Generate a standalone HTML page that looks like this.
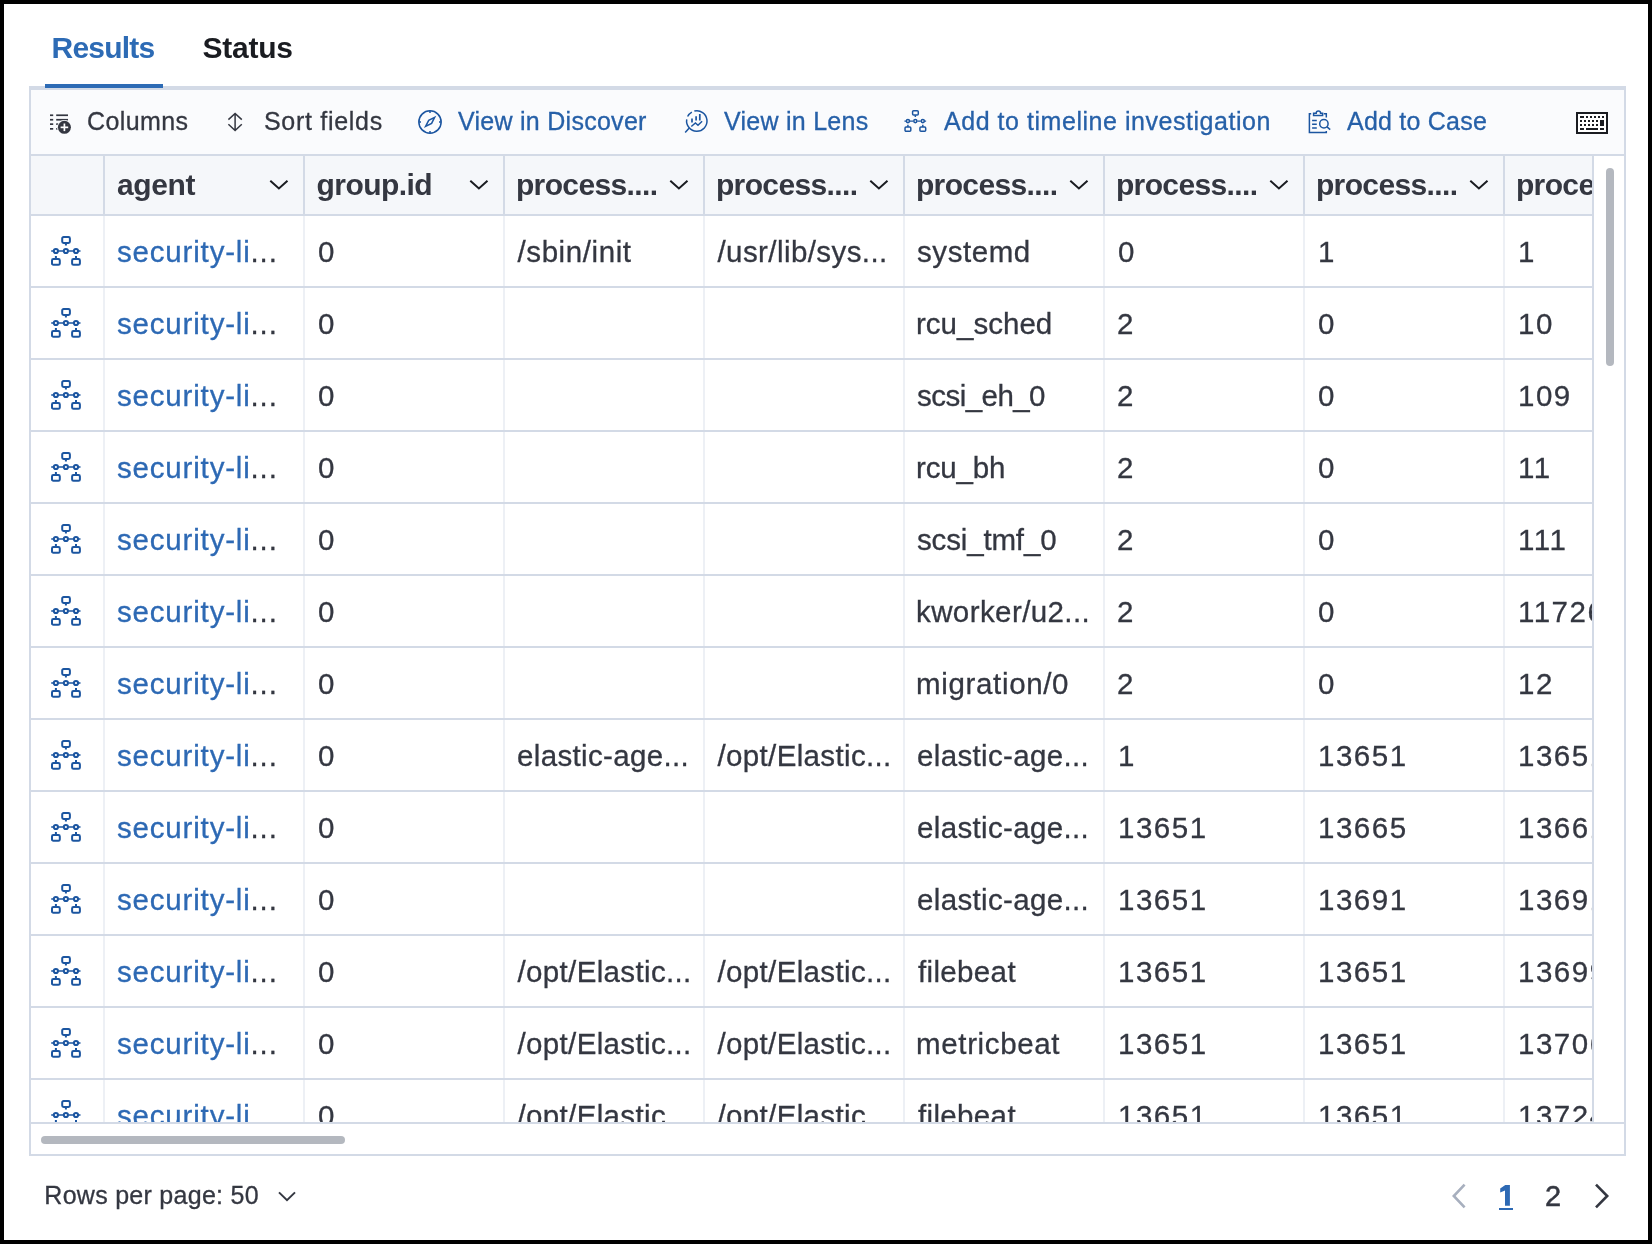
<!DOCTYPE html>
<html><head><meta charset="utf-8">
<style>
*{box-sizing:border-box;margin:0;padding:0}
html,body{width:1652px;height:1244px;overflow:hidden;background:#000}
body{position:relative;font-family:"Liberation Sans",sans-serif;color:#343741}
.a{position:absolute;white-space:nowrap;line-height:1}
.b{position:absolute}
.tabs{font-size:30px;font-weight:700}
.tb{font-size:25px;color:#343741;-webkit-text-stroke:0.3px currentColor}
.tbl{color:#2660A8}
.hd{font-size:30px;font-weight:700;color:#343741}
.cl{font-size:29.5px;color:#343741;-webkit-text-stroke:0.3px currentColor}
.lk{color:#2D69B4}
.clip{position:absolute;overflow:hidden}
.layer{position:absolute;left:0;top:0;width:1652px;height:1244px;will-change:transform}
</style></head><body>

<div class="b" style="left:4px;top:4px;width:1644px;height:1236px;background:#fff"></div>
<div class="layer">
<div class="a tabs" style="left:51.6px;top:33px;letter-spacing:-0.8px;color:#2D6BB5">Results</div>
<div class="a tabs" style="left:202.4px;top:33px;letter-spacing:-0.23px;color:#1A1C21">Status</div>
<div class="b" style="left:29px;top:86px;width:1597px;height:1070px;background:#D3DAE6"></div>
<div class="b" style="left:31px;top:90px;width:1593px;height:64px;background:#FAFBFD"></div>
<div class="b" style="left:31px;top:156px;width:1593px;height:966px;background:#fff"></div>
<div class="b" style="left:31px;top:1124px;width:1593px;height:30px;background:#fff"></div>
<div class="b" style="left:45px;top:84px;width:118px;height:4px;background:#2D6BB5"></div>
<div class="a tb" style="left:87px;top:109px;letter-spacing:0.4px">Columns</div>
<div class="a tb" style="left:264px;top:109px;letter-spacing:0.7px">Sort fields</div>
<div class="a tb tbl" style="left:458px;top:109px;letter-spacing:0.27px">View in Discover</div>
<div class="a tb tbl" style="left:724px;top:109px;letter-spacing:0.26px">View in Lens</div>
<div class="a tb tbl" style="left:944px;top:109px;letter-spacing:0.54px">Add to timeline investigation</div>
<div class="a tb tbl" style="left:1347px;top:109px;letter-spacing:0.22px">Add to Case</div>
<div class="clip" style="left:31px;top:156px;width:1561px;height:58px;background:#F5F7FA">
<div class="b" style="left:72px;top:0;width:2px;height:58px;background:#D3DAE6"></div>
<div class="a hd" style="left:85.9px;top:14px;letter-spacing:-0.35px">agent</div>
<div class="b" style="left:272px;top:0;width:2px;height:58px;background:#D3DAE6"></div>
<div class="a hd" style="left:285.5px;top:14px;letter-spacing:-0.54px">group.id</div>
<div class="b" style="left:472px;top:0;width:2px;height:58px;background:#D3DAE6"></div>
<div class="a hd" style="left:484.9px;top:14px;letter-spacing:-0.62px">process....</div>
<div class="b" style="left:672px;top:0;width:2px;height:58px;background:#D3DAE6"></div>
<div class="a hd" style="left:684.9px;top:14px;letter-spacing:-0.62px">process....</div>
<div class="b" style="left:872px;top:0;width:2px;height:58px;background:#D3DAE6"></div>
<div class="a hd" style="left:884.9px;top:14px;letter-spacing:-0.62px">process....</div>
<div class="b" style="left:1072px;top:0;width:2px;height:58px;background:#D3DAE6"></div>
<div class="a hd" style="left:1084.9px;top:14px;letter-spacing:-0.62px">process....</div>
<div class="b" style="left:1272px;top:0;width:2px;height:58px;background:#D3DAE6"></div>
<div class="a hd" style="left:1284.9px;top:14px;letter-spacing:-0.62px">process....</div>
<div class="b" style="left:1472px;top:0;width:2px;height:58px;background:#D3DAE6"></div>
<div class="a hd" style="left:1484.9px;top:14px;letter-spacing:-0.62px">process....</div>
</div>
<div class="b" style="left:31px;top:214px;width:1561px;height:2px;background:#D3DAE6"></div>
<div class="clip" style="left:31px;top:216px;width:1561px;height:906px">
<div class="b" style="left:72px;top:0;width:2px;height:906px;background:#EDF0F5"></div>
<div class="b" style="left:272px;top:0;width:2px;height:906px;background:#EDF0F5"></div>
<div class="b" style="left:472px;top:0;width:2px;height:906px;background:#EDF0F5"></div>
<div class="b" style="left:672px;top:0;width:2px;height:906px;background:#EDF0F5"></div>
<div class="b" style="left:872px;top:0;width:2px;height:906px;background:#EDF0F5"></div>
<div class="b" style="left:1072px;top:0;width:2px;height:906px;background:#EDF0F5"></div>
<div class="b" style="left:1272px;top:0;width:2px;height:906px;background:#EDF0F5"></div>
<div class="b" style="left:1472px;top:0;width:2px;height:906px;background:#EDF0F5"></div>
<div class="b" style="left:0;top:70px;width:1561px;height:2px;background:#D3DAE6"></div>
<div class="a cl" style="left:86px;top:21px;letter-spacing:0.82px"><span class="lk">security-li</span>...</div>
<div class="a cl" style="left:287px;top:21px;letter-spacing:1.5px">0</div>
<div class="a cl" style="left:486.5px;top:21px;letter-spacing:0.59px">/sbin/init</div>
<div class="a cl" style="left:686.5px;top:21px;letter-spacing:0.42px">/usr/lib/sys...</div>
<div class="a cl" style="left:886px;top:21px;letter-spacing:0.57px">systemd</div>
<div class="a cl" style="left:1087px;top:21px;letter-spacing:1.5px">0</div>
<div class="a cl" style="left:1287px;top:21px;letter-spacing:1.5px">1</div>
<div class="a cl" style="left:1487px;top:21px;letter-spacing:1.5px">1</div>
<div class="b" style="left:0;top:142px;width:1561px;height:2px;background:#D3DAE6"></div>
<div class="a cl" style="left:86px;top:93px;letter-spacing:0.82px"><span class="lk">security-li</span>...</div>
<div class="a cl" style="left:287px;top:93px;letter-spacing:1.5px">0</div>
<div class="a cl" style="left:885px;top:93px;letter-spacing:0.02px">rcu_sched</div>
<div class="a cl" style="left:1086px;top:93px;letter-spacing:1.5px">2</div>
<div class="a cl" style="left:1287px;top:93px;letter-spacing:1.5px">0</div>
<div class="a cl" style="left:1487px;top:93px;letter-spacing:1.5px">10</div>
<div class="b" style="left:0;top:214px;width:1561px;height:2px;background:#D3DAE6"></div>
<div class="a cl" style="left:86px;top:165px;letter-spacing:0.82px"><span class="lk">security-li</span>...</div>
<div class="a cl" style="left:287px;top:165px;letter-spacing:1.5px">0</div>
<div class="a cl" style="left:886px;top:165px;letter-spacing:-0.54px">scsi_eh_0</div>
<div class="a cl" style="left:1086px;top:165px;letter-spacing:1.5px">2</div>
<div class="a cl" style="left:1287px;top:165px;letter-spacing:1.5px">0</div>
<div class="a cl" style="left:1487px;top:165px;letter-spacing:1.5px">109</div>
<div class="b" style="left:0;top:286px;width:1561px;height:2px;background:#D3DAE6"></div>
<div class="a cl" style="left:86px;top:237px;letter-spacing:0.82px"><span class="lk">security-li</span>...</div>
<div class="a cl" style="left:287px;top:237px;letter-spacing:1.5px">0</div>
<div class="a cl" style="left:885px;top:237px;letter-spacing:-0.18px">rcu_bh</div>
<div class="a cl" style="left:1086px;top:237px;letter-spacing:1.5px">2</div>
<div class="a cl" style="left:1287px;top:237px;letter-spacing:1.5px">0</div>
<div class="a cl" style="left:1487px;top:237px;letter-spacing:1.5px">11</div>
<div class="b" style="left:0;top:358px;width:1561px;height:2px;background:#D3DAE6"></div>
<div class="a cl" style="left:86px;top:309px;letter-spacing:0.82px"><span class="lk">security-li</span>...</div>
<div class="a cl" style="left:287px;top:309px;letter-spacing:1.5px">0</div>
<div class="a cl" style="left:886px;top:309px;letter-spacing:-0.16px">scsi_tmf_0</div>
<div class="a cl" style="left:1086px;top:309px;letter-spacing:1.5px">2</div>
<div class="a cl" style="left:1287px;top:309px;letter-spacing:1.5px">0</div>
<div class="a cl" style="left:1487px;top:309px;letter-spacing:1.5px">111</div>
<div class="b" style="left:0;top:430px;width:1561px;height:2px;background:#D3DAE6"></div>
<div class="a cl" style="left:86px;top:381px;letter-spacing:0.82px"><span class="lk">security-li</span>...</div>
<div class="a cl" style="left:287px;top:381px;letter-spacing:1.5px">0</div>
<div class="a cl" style="left:885px;top:381px;letter-spacing:0.41px">kworker/u2...</div>
<div class="a cl" style="left:1086px;top:381px;letter-spacing:1.5px">2</div>
<div class="a cl" style="left:1287px;top:381px;letter-spacing:1.5px">0</div>
<div class="a cl" style="left:1487px;top:381px;letter-spacing:1.5px">11726</div>
<div class="b" style="left:0;top:502px;width:1561px;height:2px;background:#D3DAE6"></div>
<div class="a cl" style="left:86px;top:453px;letter-spacing:0.82px"><span class="lk">security-li</span>...</div>
<div class="a cl" style="left:287px;top:453px;letter-spacing:1.5px">0</div>
<div class="a cl" style="left:885px;top:453px;letter-spacing:0.66px">migration/0</div>
<div class="a cl" style="left:1086px;top:453px;letter-spacing:1.5px">2</div>
<div class="a cl" style="left:1287px;top:453px;letter-spacing:1.5px">0</div>
<div class="a cl" style="left:1487px;top:453px;letter-spacing:1.5px">12</div>
<div class="b" style="left:0;top:574px;width:1561px;height:2px;background:#D3DAE6"></div>
<div class="a cl" style="left:86px;top:525px;letter-spacing:0.82px"><span class="lk">security-li</span>...</div>
<div class="a cl" style="left:287px;top:525px;letter-spacing:1.5px">0</div>
<div class="a cl" style="left:486px;top:525px;letter-spacing:0.35px">elastic-age...</div>
<div class="a cl" style="left:686.5px;top:525px;letter-spacing:0.35px">/opt/Elastic...</div>
<div class="a cl" style="left:886px;top:525px;letter-spacing:0.35px">elastic-age...</div>
<div class="a cl" style="left:1087px;top:525px;letter-spacing:1.5px">1</div>
<div class="a cl" style="left:1287px;top:525px;letter-spacing:1.5px">13651</div>
<div class="a cl" style="left:1487px;top:525px;letter-spacing:1.5px">13651</div>
<div class="b" style="left:0;top:646px;width:1561px;height:2px;background:#D3DAE6"></div>
<div class="a cl" style="left:86px;top:597px;letter-spacing:0.82px"><span class="lk">security-li</span>...</div>
<div class="a cl" style="left:287px;top:597px;letter-spacing:1.5px">0</div>
<div class="a cl" style="left:886px;top:597px;letter-spacing:0.35px">elastic-age...</div>
<div class="a cl" style="left:1087px;top:597px;letter-spacing:1.5px">13651</div>
<div class="a cl" style="left:1287px;top:597px;letter-spacing:1.5px">13665</div>
<div class="a cl" style="left:1487px;top:597px;letter-spacing:1.5px">13661</div>
<div class="b" style="left:0;top:718px;width:1561px;height:2px;background:#D3DAE6"></div>
<div class="a cl" style="left:86px;top:669px;letter-spacing:0.82px"><span class="lk">security-li</span>...</div>
<div class="a cl" style="left:287px;top:669px;letter-spacing:1.5px">0</div>
<div class="a cl" style="left:886px;top:669px;letter-spacing:0.35px">elastic-age...</div>
<div class="a cl" style="left:1087px;top:669px;letter-spacing:1.5px">13651</div>
<div class="a cl" style="left:1287px;top:669px;letter-spacing:1.5px">13691</div>
<div class="a cl" style="left:1487px;top:669px;letter-spacing:1.5px">13691</div>
<div class="b" style="left:0;top:790px;width:1561px;height:2px;background:#D3DAE6"></div>
<div class="a cl" style="left:86px;top:741px;letter-spacing:0.82px"><span class="lk">security-li</span>...</div>
<div class="a cl" style="left:287px;top:741px;letter-spacing:1.5px">0</div>
<div class="a cl" style="left:486.5px;top:741px;letter-spacing:0.35px">/opt/Elastic...</div>
<div class="a cl" style="left:686.5px;top:741px;letter-spacing:0.35px">/opt/Elastic...</div>
<div class="a cl" style="left:887px;top:741px;letter-spacing:0.35px">filebeat</div>
<div class="a cl" style="left:1087px;top:741px;letter-spacing:1.5px">13651</div>
<div class="a cl" style="left:1287px;top:741px;letter-spacing:1.5px">13651</div>
<div class="a cl" style="left:1487px;top:741px;letter-spacing:1.5px">13699</div>
<div class="b" style="left:0;top:862px;width:1561px;height:2px;background:#D3DAE6"></div>
<div class="a cl" style="left:86px;top:813px;letter-spacing:0.82px"><span class="lk">security-li</span>...</div>
<div class="a cl" style="left:287px;top:813px;letter-spacing:1.5px">0</div>
<div class="a cl" style="left:486.5px;top:813px;letter-spacing:0.35px">/opt/Elastic...</div>
<div class="a cl" style="left:686.5px;top:813px;letter-spacing:0.35px">/opt/Elastic...</div>
<div class="a cl" style="left:885px;top:813px;letter-spacing:0.65px">metricbeat</div>
<div class="a cl" style="left:1087px;top:813px;letter-spacing:1.5px">13651</div>
<div class="a cl" style="left:1287px;top:813px;letter-spacing:1.5px">13651</div>
<div class="a cl" style="left:1487px;top:813px;letter-spacing:1.5px">13706</div>
<div class="b" style="left:0;top:934px;width:1561px;height:2px;background:#D3DAE6"></div>
<div class="a cl" style="left:86px;top:885px;letter-spacing:0.82px"><span class="lk">security-li</span>...</div>
<div class="a cl" style="left:287px;top:885px;letter-spacing:1.5px">0</div>
<div class="a cl" style="left:486.5px;top:885px;letter-spacing:0.35px">/opt/Elastic...</div>
<div class="a cl" style="left:686.5px;top:885px;letter-spacing:0.35px">/opt/Elastic...</div>
<div class="a cl" style="left:887px;top:885px;letter-spacing:0.35px">filebeat</div>
<div class="a cl" style="left:1087px;top:885px;letter-spacing:1.5px">13651</div>
<div class="a cl" style="left:1287px;top:885px;letter-spacing:1.5px">13651</div>
<div class="a cl" style="left:1487px;top:885px;letter-spacing:1.5px">13724</div>
</div>
<div class="b" style="left:1592px;top:156px;width:2px;height:966px;background:#D3DAE6"></div>
<div class="b" style="left:31px;top:1122px;width:1593px;height:2px;background:#D3DAE6"></div>
<div class="b" style="left:41px;top:1136px;width:304px;height:8px;border-radius:4px;background:#B4B8BF"></div>
<div class="b" style="left:1606px;top:168px;width:8px;height:198px;border-radius:4px;background:#B4B8BF"></div>
<div class="a tb" style="left:44.3px;top:1183px;letter-spacing:0.28px">Rows per page: 50</div>
<div class="b" style="left:1499px;top:1208px;width:14px;height:2px;background:#2D69B4"></div>
<div class="a" style="left:1545px;top:1182px;font-size:29px;color:#343741;-webkit-text-stroke:0.5px currentColor">2</div>
<svg class="b" style="left:0;top:0" width="1652" height="1244" viewBox="0 0 1652 1244"><g fill="#343741"><rect x="50" y="114.4" width="3.2" height="1.7"/><rect x="50" y="118.9" width="3.2" height="1.7"/><rect x="50" y="123.3" width="3.2" height="1.7"/><rect x="50" y="128" width="3.2" height="1.7"/><rect x="56.2" y="114.4" width="11.8" height="1.7"/><rect x="56.2" y="118.9" width="11.8" height="1.7"/><rect x="56.2" y="123.3" width="4.5" height="1.7"/><rect x="56.2" y="128" width="4.5" height="1.7"/><circle cx="64.4" cy="127.3" r="7.4" fill="#FAFBFD"/><circle cx="64.4" cy="127.3" r="6.5"/><rect x="60.6" y="126.5" width="7.6" height="1.7" fill="#fff"/><rect x="63.55" y="123.5" width="1.7" height="7.6" fill="#fff"/></g><g fill="none" stroke="#343741" stroke-width="1.5" stroke-linecap="butt"><path d="M235.1 113.6V130.3M228.4 119.6L235.1 113.4L241.8 119.6M228.4 124.3L235.1 130.5L241.8 124.3"/></g><g fill="none" stroke="#1B55A0" stroke-width="1.5"><circle cx="430" cy="122" r="11.15"/><path d="M430 110.8v2.2M430 131v2.2M418.8 122h2.2M439 122h2.2"/><path d="M434.6 117.4L428.7 120.3L425.6 126.4L431.6 123.4Z" stroke-linejoin="miter"/></g><g fill="none" stroke="#1B55A0" stroke-width="1.5"><path d="M694.33 111.10 A10.2 10.2 0 1 1 686.73 119.40"/><path d="M687.63 116.53 A10.2 10.2 0 0 1 691.85 112.08"/><path d="M689 128.2L685.2 132.4"/><path d="M692 118.4v4.1M696.1 116.3v4.3M699.8 114v6.4" stroke-width="1.7"/><path d="M691.3 126.5L695.4 123L698 125.3L702.1 121.3"/></g><g transform="translate(904.3,110) scale(0.74)" fill="none" stroke="#1B55A0" stroke-width="2.0"><rect x="11.2" y="1" width="7.7" height="5.9" rx="1.4"/><path d="M14.9 6.9v2.6"/><path d="M0.2 15H2.5M7.3 15H12.2M17.6 15H22.3M27.3 15H29.5" stroke-width="1.5"/><circle cx="4.9" cy="15" r="2.1"/><circle cx="14.9" cy="15" r="2.1"/><circle cx="25" cy="15" r="2.1"/><path d="M4.9 20v3M25 20v3"/><rect x="1" y="23" width="7.8" height="5.8" rx="1.4"/><rect x="21.1" y="23" width="7.8" height="5.8" rx="1.4"/></g><g fill="none" stroke="#1B55A0" stroke-width="1.5"><path d="M1311.2 113.7H1309.4V132.4H1326.3V131"/><path d="M1323.8 113.7H1326.3V117.5"/><path d="M1313.6 115.6V113.2H1316.2A2 2 0 0 1 1320.6 113.2H1322.6V115.6Z"/><path d="M1312.1 120.4h4.7M1312.1 124.2h4.7M1312.1 127.9h4.7"/><circle cx="1323.9" cy="123.7" r="4.2"/><path d="M1327 126.9L1330.2 129.6"/></g><g fill="#1A1C21"><path fill-rule="evenodd" d="M1576 112h32v22h-32zM1578 114v18h28v-18z"/><rect x="1578" y="114" width="28" height="18" fill="#fff"/><rect x="1580" y="116" width="4" height="2"/><rect x="1586" y="116" width="2" height="2"/><rect x="1590" y="116" width="2" height="2"/><rect x="1594" y="116" width="2" height="2"/><rect x="1598" y="116" width="2" height="2"/><rect x="1602" y="116" width="2" height="2"/><rect x="1580" y="120" width="2" height="2"/><rect x="1580" y="124" width="2" height="2"/><rect x="1584" y="120" width="2" height="2"/><rect x="1584" y="124" width="2" height="2"/><rect x="1588" y="120" width="2" height="2"/><rect x="1588" y="124" width="2" height="2"/><rect x="1592" y="120" width="2" height="2"/><rect x="1592" y="124" width="2" height="2"/><rect x="1596" y="120" width="2" height="2"/><rect x="1596" y="124" width="2" height="2"/><rect x="1600" y="120" width="4" height="6"/><rect x="1580" y="128" width="4" height="2"/><rect x="1586" y="128" width="12" height="2"/><rect x="1600" y="128" width="4" height="2"/></g><path d="M270.3 180.7L278.9 188.5L287.5 180.7" fill="none" stroke="#1A1C21" stroke-width="2"/><path d="M470.3 180.7L478.9 188.5L487.5 180.7" fill="none" stroke="#1A1C21" stroke-width="2"/><path d="M670.3 180.7L678.9 188.5L687.5 180.7" fill="none" stroke="#1A1C21" stroke-width="2"/><path d="M870.3 180.7L878.9 188.5L887.5 180.7" fill="none" stroke="#1A1C21" stroke-width="2"/><path d="M1070.3 180.7L1078.9 188.5L1087.5 180.7" fill="none" stroke="#1A1C21" stroke-width="2"/><path d="M1270.3 180.7L1278.9 188.5L1287.5 180.7" fill="none" stroke="#1A1C21" stroke-width="2"/><path d="M1470.3 180.7L1478.9 188.5L1487.5 180.7" fill="none" stroke="#1A1C21" stroke-width="2"/><path d="M1670.3 180.7L1678.9 188.5L1687.5 180.7" fill="none" stroke="#1A1C21" stroke-width="2"/><clipPath id="bc"><rect x="31" y="216" width="1561" height="906"/></clipPath><g clip-path="url(#bc)"><g transform="translate(51,236) scale(1.0)" fill="none" stroke="#1B55A0" stroke-width="2.0"><rect x="11.2" y="1" width="7.7" height="5.9" rx="1.4"/><path d="M14.9 6.9v2.6"/><path d="M0.2 15H2.5M7.3 15H12.2M17.6 15H22.3M27.3 15H29.5" stroke-width="1.5"/><circle cx="4.9" cy="15" r="2.1"/><circle cx="14.9" cy="15" r="2.1"/><circle cx="25" cy="15" r="2.1"/><path d="M4.9 20v3M25 20v3"/><rect x="1" y="23" width="7.8" height="5.8" rx="1.4"/><rect x="21.1" y="23" width="7.8" height="5.8" rx="1.4"/></g><g transform="translate(51,308) scale(1.0)" fill="none" stroke="#1B55A0" stroke-width="2.0"><rect x="11.2" y="1" width="7.7" height="5.9" rx="1.4"/><path d="M14.9 6.9v2.6"/><path d="M0.2 15H2.5M7.3 15H12.2M17.6 15H22.3M27.3 15H29.5" stroke-width="1.5"/><circle cx="4.9" cy="15" r="2.1"/><circle cx="14.9" cy="15" r="2.1"/><circle cx="25" cy="15" r="2.1"/><path d="M4.9 20v3M25 20v3"/><rect x="1" y="23" width="7.8" height="5.8" rx="1.4"/><rect x="21.1" y="23" width="7.8" height="5.8" rx="1.4"/></g><g transform="translate(51,380) scale(1.0)" fill="none" stroke="#1B55A0" stroke-width="2.0"><rect x="11.2" y="1" width="7.7" height="5.9" rx="1.4"/><path d="M14.9 6.9v2.6"/><path d="M0.2 15H2.5M7.3 15H12.2M17.6 15H22.3M27.3 15H29.5" stroke-width="1.5"/><circle cx="4.9" cy="15" r="2.1"/><circle cx="14.9" cy="15" r="2.1"/><circle cx="25" cy="15" r="2.1"/><path d="M4.9 20v3M25 20v3"/><rect x="1" y="23" width="7.8" height="5.8" rx="1.4"/><rect x="21.1" y="23" width="7.8" height="5.8" rx="1.4"/></g><g transform="translate(51,452) scale(1.0)" fill="none" stroke="#1B55A0" stroke-width="2.0"><rect x="11.2" y="1" width="7.7" height="5.9" rx="1.4"/><path d="M14.9 6.9v2.6"/><path d="M0.2 15H2.5M7.3 15H12.2M17.6 15H22.3M27.3 15H29.5" stroke-width="1.5"/><circle cx="4.9" cy="15" r="2.1"/><circle cx="14.9" cy="15" r="2.1"/><circle cx="25" cy="15" r="2.1"/><path d="M4.9 20v3M25 20v3"/><rect x="1" y="23" width="7.8" height="5.8" rx="1.4"/><rect x="21.1" y="23" width="7.8" height="5.8" rx="1.4"/></g><g transform="translate(51,524) scale(1.0)" fill="none" stroke="#1B55A0" stroke-width="2.0"><rect x="11.2" y="1" width="7.7" height="5.9" rx="1.4"/><path d="M14.9 6.9v2.6"/><path d="M0.2 15H2.5M7.3 15H12.2M17.6 15H22.3M27.3 15H29.5" stroke-width="1.5"/><circle cx="4.9" cy="15" r="2.1"/><circle cx="14.9" cy="15" r="2.1"/><circle cx="25" cy="15" r="2.1"/><path d="M4.9 20v3M25 20v3"/><rect x="1" y="23" width="7.8" height="5.8" rx="1.4"/><rect x="21.1" y="23" width="7.8" height="5.8" rx="1.4"/></g><g transform="translate(51,596) scale(1.0)" fill="none" stroke="#1B55A0" stroke-width="2.0"><rect x="11.2" y="1" width="7.7" height="5.9" rx="1.4"/><path d="M14.9 6.9v2.6"/><path d="M0.2 15H2.5M7.3 15H12.2M17.6 15H22.3M27.3 15H29.5" stroke-width="1.5"/><circle cx="4.9" cy="15" r="2.1"/><circle cx="14.9" cy="15" r="2.1"/><circle cx="25" cy="15" r="2.1"/><path d="M4.9 20v3M25 20v3"/><rect x="1" y="23" width="7.8" height="5.8" rx="1.4"/><rect x="21.1" y="23" width="7.8" height="5.8" rx="1.4"/></g><g transform="translate(51,668) scale(1.0)" fill="none" stroke="#1B55A0" stroke-width="2.0"><rect x="11.2" y="1" width="7.7" height="5.9" rx="1.4"/><path d="M14.9 6.9v2.6"/><path d="M0.2 15H2.5M7.3 15H12.2M17.6 15H22.3M27.3 15H29.5" stroke-width="1.5"/><circle cx="4.9" cy="15" r="2.1"/><circle cx="14.9" cy="15" r="2.1"/><circle cx="25" cy="15" r="2.1"/><path d="M4.9 20v3M25 20v3"/><rect x="1" y="23" width="7.8" height="5.8" rx="1.4"/><rect x="21.1" y="23" width="7.8" height="5.8" rx="1.4"/></g><g transform="translate(51,740) scale(1.0)" fill="none" stroke="#1B55A0" stroke-width="2.0"><rect x="11.2" y="1" width="7.7" height="5.9" rx="1.4"/><path d="M14.9 6.9v2.6"/><path d="M0.2 15H2.5M7.3 15H12.2M17.6 15H22.3M27.3 15H29.5" stroke-width="1.5"/><circle cx="4.9" cy="15" r="2.1"/><circle cx="14.9" cy="15" r="2.1"/><circle cx="25" cy="15" r="2.1"/><path d="M4.9 20v3M25 20v3"/><rect x="1" y="23" width="7.8" height="5.8" rx="1.4"/><rect x="21.1" y="23" width="7.8" height="5.8" rx="1.4"/></g><g transform="translate(51,812) scale(1.0)" fill="none" stroke="#1B55A0" stroke-width="2.0"><rect x="11.2" y="1" width="7.7" height="5.9" rx="1.4"/><path d="M14.9 6.9v2.6"/><path d="M0.2 15H2.5M7.3 15H12.2M17.6 15H22.3M27.3 15H29.5" stroke-width="1.5"/><circle cx="4.9" cy="15" r="2.1"/><circle cx="14.9" cy="15" r="2.1"/><circle cx="25" cy="15" r="2.1"/><path d="M4.9 20v3M25 20v3"/><rect x="1" y="23" width="7.8" height="5.8" rx="1.4"/><rect x="21.1" y="23" width="7.8" height="5.8" rx="1.4"/></g><g transform="translate(51,884) scale(1.0)" fill="none" stroke="#1B55A0" stroke-width="2.0"><rect x="11.2" y="1" width="7.7" height="5.9" rx="1.4"/><path d="M14.9 6.9v2.6"/><path d="M0.2 15H2.5M7.3 15H12.2M17.6 15H22.3M27.3 15H29.5" stroke-width="1.5"/><circle cx="4.9" cy="15" r="2.1"/><circle cx="14.9" cy="15" r="2.1"/><circle cx="25" cy="15" r="2.1"/><path d="M4.9 20v3M25 20v3"/><rect x="1" y="23" width="7.8" height="5.8" rx="1.4"/><rect x="21.1" y="23" width="7.8" height="5.8" rx="1.4"/></g><g transform="translate(51,956) scale(1.0)" fill="none" stroke="#1B55A0" stroke-width="2.0"><rect x="11.2" y="1" width="7.7" height="5.9" rx="1.4"/><path d="M14.9 6.9v2.6"/><path d="M0.2 15H2.5M7.3 15H12.2M17.6 15H22.3M27.3 15H29.5" stroke-width="1.5"/><circle cx="4.9" cy="15" r="2.1"/><circle cx="14.9" cy="15" r="2.1"/><circle cx="25" cy="15" r="2.1"/><path d="M4.9 20v3M25 20v3"/><rect x="1" y="23" width="7.8" height="5.8" rx="1.4"/><rect x="21.1" y="23" width="7.8" height="5.8" rx="1.4"/></g><g transform="translate(51,1028) scale(1.0)" fill="none" stroke="#1B55A0" stroke-width="2.0"><rect x="11.2" y="1" width="7.7" height="5.9" rx="1.4"/><path d="M14.9 6.9v2.6"/><path d="M0.2 15H2.5M7.3 15H12.2M17.6 15H22.3M27.3 15H29.5" stroke-width="1.5"/><circle cx="4.9" cy="15" r="2.1"/><circle cx="14.9" cy="15" r="2.1"/><circle cx="25" cy="15" r="2.1"/><path d="M4.9 20v3M25 20v3"/><rect x="1" y="23" width="7.8" height="5.8" rx="1.4"/><rect x="21.1" y="23" width="7.8" height="5.8" rx="1.4"/></g><g transform="translate(51,1100) scale(1.0)" fill="none" stroke="#1B55A0" stroke-width="2.0"><rect x="11.2" y="1" width="7.7" height="5.9" rx="1.4"/><path d="M14.9 6.9v2.6"/><path d="M0.2 15H2.5M7.3 15H12.2M17.6 15H22.3M27.3 15H29.5" stroke-width="1.5"/><circle cx="4.9" cy="15" r="2.1"/><circle cx="14.9" cy="15" r="2.1"/><circle cx="25" cy="15" r="2.1"/><path d="M4.9 20v3M25 20v3"/><rect x="1" y="23" width="7.8" height="5.8" rx="1.4"/><rect x="21.1" y="23" width="7.8" height="5.8" rx="1.4"/></g></g><path d="M1500.2 1188.6L1505.3 1185H1509.9V1205.8H1505V1190.6L1500.2 1192.6Z" fill="#2D69B4"/><path d="M295 1192.4L287 1200.2L279 1192.4" fill="none" stroke="#343741" stroke-width="2"/><path d="M1464.6 1184.6L1453.8 1196L1464.6 1207.4" fill="none" stroke="#A7AFBE" stroke-width="2.6"/><path d="M1596 1184.6L1607.2 1196L1596 1207.4" fill="none" stroke="#343741" stroke-width="2.6"/></svg>
</div>
<div class="b" style="left:0;top:0;width:1652px;height:4px;background:#000"></div>
<div class="b" style="left:0;top:1240px;width:1652px;height:4px;background:#000"></div>
<div class="b" style="left:0;top:0;width:4px;height:1244px;background:#000"></div>
<div class="b" style="left:1648px;top:0;width:4px;height:1244px;background:#000"></div>
</body></html>
